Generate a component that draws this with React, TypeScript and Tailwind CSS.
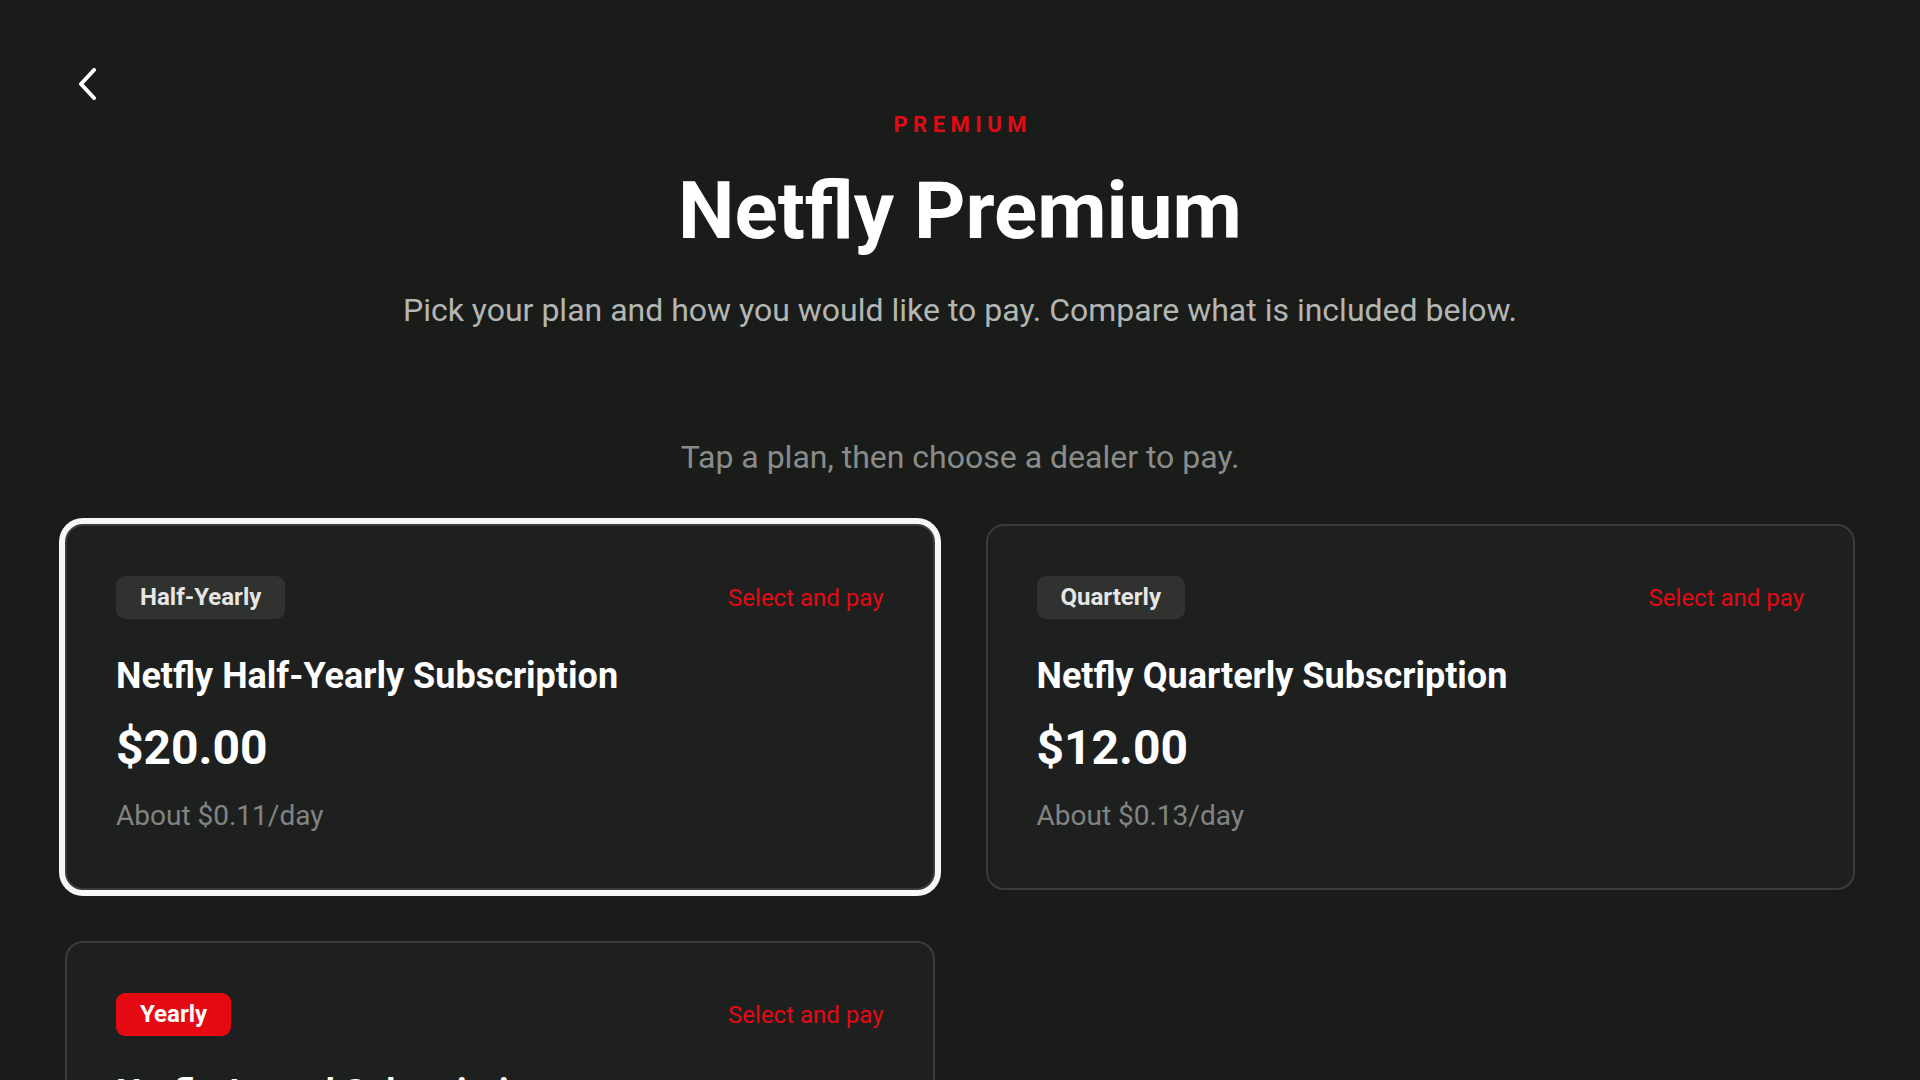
import { useState } from 'react'

type Plan = {
  id: string
  badge: string
  title: string
  price: string
  perDay: string
  highlight?: boolean
}

const plans: Plan[] = [
  { id: 'half', badge: 'Half-Yearly', title: 'Netfly Half-Yearly Subscription', price: '$20.00', perDay: 'About $0.11/day' },
  { id: 'quarter', badge: 'Quarterly', title: 'Netfly Quarterly Subscription', price: '$12.00', perDay: 'About $0.13/day' },
  { id: 'year', badge: 'Yearly', title: 'Netfly Annual Subscription', price: '$36.00', perDay: 'About $0.10/day', highlight: true }
]

function BackIcon() {
  return (
    <svg width="20" height="32" viewBox="0 0 20 32" fill="none">
      <polyline points="16,2 3,16 16,30" stroke="white" strokeWidth="4" strokeLinecap="round" strokeLinejoin="round" />
    </svg>
  )
}

function PlanCard({ plan, focused, onFocus }: { plan: Plan; focused: boolean; onFocus: () => void }) {
  return (
    <button
      onClick={onFocus}
      className={`text-left rounded-[18px] border-2 border-[#393c39] bg-[#1e201f] px-[49px] pt-[50px] pb-[55px] ${
        focused ? 'ring-[6px] ring-[#f7f7f7]' : ''
      }`}
    >
      <div className="flex items-center justify-between">
        <span
          className={`rounded-[9px] px-[24px] py-[7px] text-[24px] leading-[29px] font-bold ${
            plan.highlight ? 'bg-[#e50914] text-white' : 'bg-[#2f322f] text-[#e6e6e6]'
          }`}
        >
          {plan.badge}
        </span>
        <span className="text-[24px] leading-[28px] text-[#e50914]">Select and pay</span>
      </div>
      <div className="mt-[35px] text-[36px] leading-[44px] font-bold text-white">{plan.title}</div>
      <div className="mt-[22px] text-[48px] leading-[56px] font-bold text-white">{plan.price}</div>
      <div className="mt-[23px] text-[28px] leading-[34px] text-[#828482]">{plan.perDay}</div>
    </button>
  )
}

export default function App() {
  const [selected, setSelected] = useState('half')

  return (
    <div className="min-h-screen bg-[#1a1c1a] font-['Roboto',_'Liberation_Sans',_sans-serif] pb-20">
      {/* Header */}
      <div className="pl-[78px] pt-[68px]">
        <button className="block">
          <BackIcon />
        </button>
      </div>

      <div className="flex flex-col items-center text-center">
        <div className="mt-[12px] pl-[0.25em] text-[22px] leading-[26px] font-bold tracking-[0.25em] text-[#e50914]">
          PREMIUM
        </div>
        <h1 className="mt-[33px] text-[80px] leading-[80px] font-bold text-white">Netfly Premium</h1>
        <p className="mt-[40px] text-[32px] leading-[38px] text-[#b4b6b4]">
          Pick your plan and how you would like to pay. Compare what is included below.
        </p>
        <p className="mt-[109px] text-[32px] leading-[38px] text-[#8a8c8a]">
          Tap a plan, then choose a dealer to pay.
        </p>
      </div>

      {/* Plans */}
      <div className="mt-[48px] grid grid-cols-2 gap-[51px] px-[65px]">
        {plans.map((plan) => (
          <PlanCard key={plan.id} plan={plan} focused={selected === plan.id} onFocus={() => setSelected(plan.id)} />
        ))}
      </div>
    </div>
  )
}
